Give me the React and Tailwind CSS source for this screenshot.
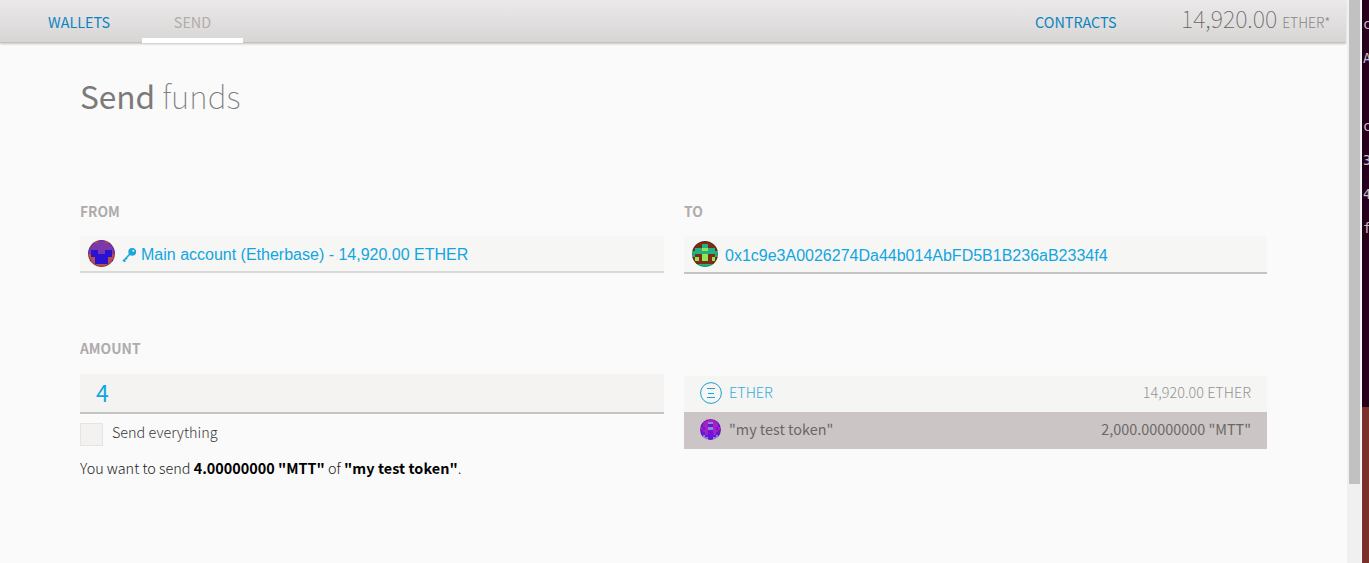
import React, { useState } from 'react';

// left half of each icon, mirrored when drawn
const mainIcon = ['OOOP', 'OPPP', 'PPPP', 'PBBP', 'OBBB', 'OOBB', 'BOBB', 'OOOO'];
const targetIcon = ['RRRR', 'RRRG', 'RGGY', 'GGGG', 'GRRY', 'RYRY', 'RRRR', 'GGGG'];
const tokenIcon = ['VVMM', 'VMML', 'VMMV', 'MVML', 'VMMV', 'VVMV', 'VLVV', 'VLLV'];

const colors = {
  O: '#b5504f',
  P: '#7b38ab',
  B: '#2a12d2',
  R: '#7c2c17',
  G: '#22b183',
  Y: '#93e552',
  V: '#6a14dc',
  M: '#a323c0',
  L: '#8c85dd',
};

function Identicon({ id, rows, size }) {
  return (
    <svg width={size} height={size} viewBox="0 0 8 8" className="shrink-0">
      <clipPath id={id}>
        <circle cx="4" cy="4" r="4" />
      </clipPath>
      <g clipPath={`url(#${id})`}>
        <g shapeRendering="crispEdges">
          {rows.map((row, y) =>
            (row + row.split('').reverse().join('')).split('').map((c, x) => (
              <rect key={`${x}-${y}`} x={x} y={y} width="1" height="1" fill={colors[c]} />
            ))
          )}
        </g>
        <circle cx="4" cy="4" r="3.85" fill="none" stroke="#000" strokeOpacity="0.2" strokeWidth="0.3" />
      </g>
    </svg>
  );
}

function KeyIcon() {
  return (
    <svg width="15" height="16" viewBox="0 0 15 16" fill="none" className="shrink-0">
      <circle cx="10.2" cy="4.8" r="3.9" fill="#1ba5da" />
      <circle cx="11.3" cy="3.7" r="1" fill="#f6f6f4" />
      <path d="M8 7 L1 14.2 M1.4 12.6 L3.4 14.8 M3.6 10.8 L5 12.3" stroke="#1ba5da" strokeWidth="1.6" />
    </svg>
  );
}

function EtherIcon() {
  return (
    <svg width="22" height="22" viewBox="0 0 22 22" fill="none" stroke="#1f9fd2" className="shrink-0">
      <circle cx="11" cy="11" r="10.4" strokeWidth="1" />
      <path d="M7 6.5h8M8 11.5h6M7 15.5h8" strokeWidth="1" />
    </svg>
  );
}

function Header() {
  return (
    <header className="flex h-[43px] w-[1346px] bg-linear-to-b from-[#ebe9e9] to-[#d8d5d5] border-b border-[#c4c1c1] shadow-[0_1px_2px_rgba(0,0,0,0.22)] text-[14.4px] leading-[20px] whitespace-nowrap">
      <a href="#" className="ml-[48px] mt-[12px] w-[94px] text-[#0c84c0]">WALLETS</a>
      <a href="#" className="flex h-[43px] w-[101px] justify-center border-b-[5px] border-white pt-[12px] text-[#b2abab]">SEND</a>
      <a href="#" className="ml-[792px] mt-[12px] w-[146px] text-[#0c84c0]">CONTRACTS</a>
      <div className="flex items-baseline pt-[4px] text-[#686363]">
        <span className="text-[23.4px] leading-[28px] font-thin">14,920.00</span>
        <span className="ml-[5px] text-[13.9px] font-light text-[#8b8686]">ETHER*</span>
      </div>
    </header>
  );
}

function Label({ children }) {
  return <h3 className="h-[20px] text-[13.8px] leading-[18px] font-bold text-[#adabab]">{children}</h3>;
}

export default function App() {
  const [amount, setAmount] = useState('4');
  const terminal = ['c', 'A', '', 'c', '3', '4', 'f'];

  return (
    <div className="flex h-[563px] w-[1369px] overflow-hidden bg-[#fafafa] font-['Noto_Sans_CJK_SC',sans-serif]">
      <div className="w-[1347px] shrink-0">
        <Header />
        <main className="pl-[80px] whitespace-nowrap">
          <h1 className="mt-[32px] h-[44px] text-[31.6px] leading-[41px] text-[#7c7979]">
            <span className="font-normal">Send</span> <span className="font-thin">funds</span>
          </h1>

          <div className="mt-[83px] grid w-[1187px] grid-cols-[584px_583px] gap-x-[20px]">
            <div>
              <Label>FROM</Label>
              <div className="mt-[14px] flex h-[37px] items-center border-b-2 border-[#d9d9d7] bg-[#f6f6f5] pl-[8px] font-['Liberation_Sans',sans-serif] text-[16px] text-[#12a5e0]">
                <Identicon id="main" rows={mainIcon} size={27} />
                <span className="ml-[7px] flex pt-[2px]"><KeyIcon /></span>
                <span className="ml-[4px] pt-[2px]">Main account (Etherbase) - 14,920.00 ETHER</span>
              </div>
            </div>
            <div>
              <Label>TO</Label>
              <div className="mt-[14px] flex h-[38px] items-center border-b-2 border-[#c4c4c4] bg-[#f6f6f5] pl-[8px] font-['Liberation_Sans',sans-serif] text-[16px] text-[#12a5e0]">
                <Identicon id="target" rows={targetIcon} size={26} />
                <span className="ml-[7px] pt-[3px]">0x1c9e3A0026274Da44b014AbFD5B1B236aB2334f4</span>
              </div>
            </div>
          </div>

          <div className="mt-[65px] grid w-[1187px] grid-cols-[584px_583px] gap-x-[20px]">
            <div>
              <Label>AMOUNT</Label>
              <input
                className="mt-[15px] block h-[40px] w-full border-b-2 border-[#c4c4c4] bg-[#f4f3f2] px-[16px] pb-[2px] text-[23px] text-[#12a5e0] outline-none"
                type="text"
                value={amount}
                onChange={(e) => setAmount(e.target.value)}
              />
              <label className="mt-[8px] flex h-[24px] items-center text-[14.4px] font-light text-[#383636]">
                <span className="h-[23px] w-[23px] border border-[#e5e3e3] bg-[#f3f2f1]" />
                <span className="ml-[9px] pb-[5px] leading-[20px]">Send everything</span>
              </label>
              <p className="mt-[12px] text-[14.4px] leading-[20px] font-light text-[#222]">
                You want to send <strong className="font-bold text-black">4.00000000 "MTT"</strong> of{' '}
                <strong className="font-bold tracking-[0.06px] text-black">"my test token"</strong>.
              </p>
            </div>
            <ul className="mt-[37px] text-[14.4px] leading-[20px]">
              <li className="flex h-[36px] items-center bg-[#f5f5f3] px-[16px] font-light">
                <span className="-mt-[2px]"><EtherIcon /></span>
                <span className="ml-[7px] pb-[5px] text-[#35abdb]">ETHER</span>
                <span className="ml-auto pb-[5px] text-[#969393]">14,920.00 ETHER</span>
              </li>
              <li className="flex h-[37px] items-center bg-[#cbc6c5] px-[16px] text-[#6b6666]">
                <span className="-mt-[2px]"><Identicon id="token" rows={tokenIcon} size={21} /></span>
                <span className="ml-[8px] pb-[3px]">"my test token"</span>
                <span className="ml-auto pb-[3px]">2,000.00000000 "MTT"</span>
              </li>
            </ul>
          </div>
        </main>
      </div>

      {/* scrollbar */}
      <div className="w-[14px] shrink-0 bg-[#f0f0f0] pl-[2px]">
        <div className="h-[484px] w-[11px] bg-[#c1c1c1]" />
      </div>

      {/* terminal window behind */}
      <div className="ml-px w-[7px] shrink-0 overflow-hidden bg-[#7c302c]">
        <div className="h-[407px] bg-[#26001a] pt-[7px] pl-px font-['DejaVu_Sans_Mono',monospace] text-[13.5px] leading-[34px] text-[#c9c0c6]">
          {terminal.map((c, i) => (
            <div key={i} className="h-[34px]">{c}</div>
          ))}
        </div>
      </div>
    </div>
  );
}
